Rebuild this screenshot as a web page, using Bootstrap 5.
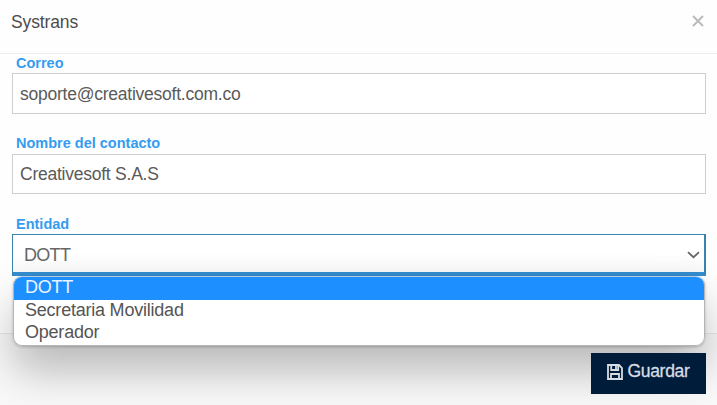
<!DOCTYPE html>
<html lang="es">
<head>
<meta charset="utf-8">
<meta name="viewport" content="width=device-width, initial-scale=1">
<title>Systrans</title>
<link href="https://cdn.jsdelivr.net/npm/bootstrap@5.3.0/dist/css/bootstrap.min.css" rel="stylesheet">
<style>
body{font-family:"Liberation Sans",Arial,sans-serif;color:#555;height:405px;overflow:hidden;background:#fefefe}
.dlg-head{height:54px;border-bottom:1px solid #ededed;padding:0 11px 10px 11px}
.dlg-title{font-size:17.5px;line-height:20px;color:#4c4c4c;font-weight:400;letter-spacing:-.12px}
.dlg-x{width:12px;height:12px;margin:0 2px 2px 0}
.dlg-body{padding:0 11px 0 12px;height:279px}
.lbl{font-size:14.5px;line-height:16px;font-weight:700;color:#359cf0;padding:1px 0 0 4px;display:block;height:19px}
.field{height:41px;margin-bottom:21px}
.field+.lbl{padding-top:0}
.field.short+.lbl{padding-top:1px}
.field.short{height:40px}
.box{height:100%;font-size:17.5px;letter-spacing:-.24px;color:#5a5a5a;border:1px solid #ccced2;border-radius:0;padding:1px 7px 0;background:#fff}
.box:focus{box-shadow:none}
.pick{height:42px;border:1px solid #3c82ae;border-right-width:2px;border-bottom:4px solid #338dcf;padding:3px 4px 0 11px;font-size:18px;letter-spacing:-.7px;color:#666;background:linear-gradient(#fff 50%,#f8f8f8)}
.menu{top:42px;left:1px;width:692px;height:70px;z-index:5;border-radius:9px;background:#fff;overflow:hidden;border:1px solid #b5b5b5;border-top-color:#b9c9d9;font-size:18px;line-height:20px;letter-spacing:-.22px;color:#555}
.menu-wrap{z-index:4;top:42px;left:1px;width:692px;height:70px;border-radius:9px;box-shadow:0 25px 44px rgba(0,0,0,.26),0 1px 3px rgba(0,0,0,.2)}
.opt{padding-left:11px;height:22px}
.opt.on{background:#1e8fff;color:#e9f4ff;height:23px}
.dlg-foot{border-top:1px solid #e8e8e8;padding:19px 11px 0 0;height:72px;background:#f9f9f9}
.save{width:115px;height:41px;border-radius:0;background:#001c3b;color:#d8dde4;font-size:17.5px;letter-spacing:-.3px;-webkit-text-stroke:.3px #d8dde4;padding:0 0 4px;z-index:6}
</style>
<script src="https://cdn.jsdelivr.net/npm/bootstrap@5.3.0/dist/js/bootstrap.bundle.min.js"></script>
</head>
<body>
<header class="dlg-head d-flex align-items-center justify-content-between">
  <h1 class="dlg-title m-0">Systrans</h1>
  <svg class="dlg-x" viewBox="0 0 12 12" fill="none" stroke="#bbb" stroke-width="2"><path d="M1 1l10 10M11 1L1 11"/></svg>
</header>
<main class="dlg-body">
  <label class="lbl" for="mail">Correo</label>
  <div class="field"><input id="mail" class="form-control box" value="soporte@creativesoft.com.co"></div>
  <label class="lbl" for="contact">Nombre del contacto</label>
  <div class="field short"><input id="contact" class="form-control box" value="Creativesoft S.A.S"></div>
  <label class="lbl">Entidad</label>
  <div class="position-relative">
    <div class="pick d-flex align-items-center justify-content-between">
      <span>DOTT</span>
      <svg width="13" height="8" viewBox="0 0 13 8" fill="none" stroke="#666" stroke-width="1.8"><path d="M1 1.2l5.5 5 5.5-5"/></svg>
    </div>
    <div class="menu-wrap position-absolute"></div>
    <div class="menu position-absolute">
      <div class="opt on">DOTT</div>
      <div class="opt">Secretaria Movilidad</div>
      <div class="opt">Operador</div>
    </div>
  </div>
</main>
<footer class="dlg-foot d-flex justify-content-end align-items-start">
  <button class="btn save d-flex align-items-center justify-content-center gap-1 border-0 position-relative" type="button">
    <svg width="16" height="16" viewBox="0 0 16 16" fill="none" stroke="#d8dde4" stroke-width="1.8"><path d="M1 1h11l3 3v11H1z"/><path d="M4.2 1v5h7V1M4 15v-5h8v5"/><path d="M9 2v3"/></svg>
    <span>Guardar</span>
  </button>
</footer>
</body>
</html>
